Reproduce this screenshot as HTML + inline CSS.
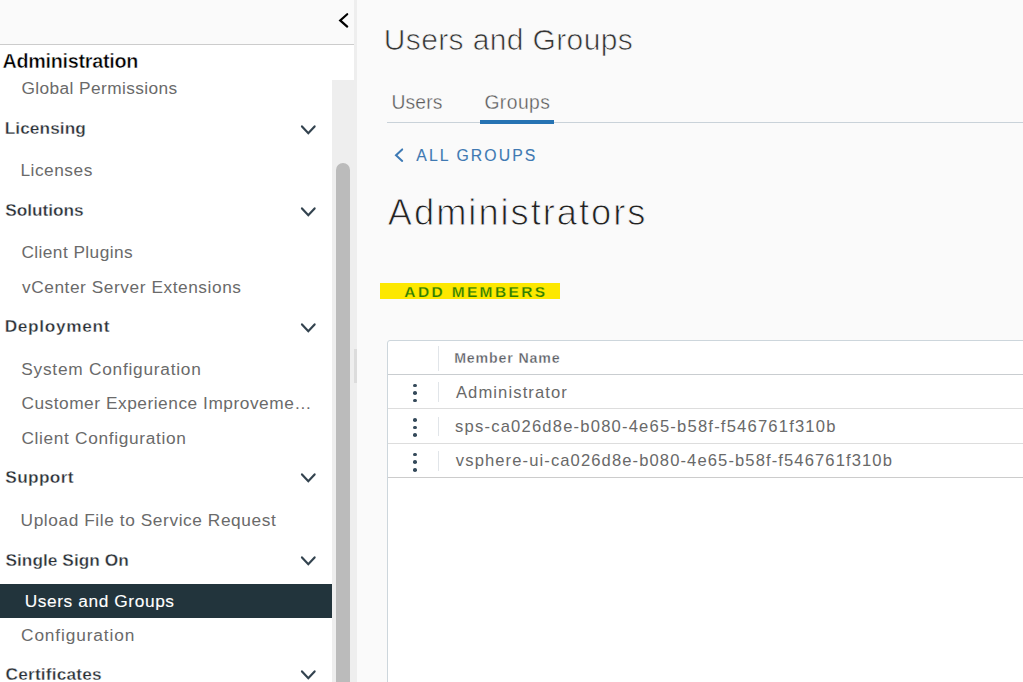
<!DOCTYPE html>
<html><head><meta charset="utf-8"><title>vSphere - Users and Groups</title>
<style>
html,body{margin:0;padding:0;}
body{width:1023px;height:682px;overflow:hidden;position:relative;background:#fafafa;font-family:"Liberation Sans",sans-serif;}
.t{position:absolute;white-space:nowrap;line-height:24px;height:24px;}
.a{position:absolute;}

</style></head>
<body>
<!-- sidebar -->
<div class="a" style="left:0;top:0;width:354px;height:44px;background:#fafafa;border-bottom:1px solid #ccc;"></div>
<div class="a" style="left:0;top:45px;width:332px;height:637px;background:#fff;"></div>
<div class="a" style="left:332px;top:45px;width:22px;height:35px;background:#fff;"></div>
<!-- scrollbar -->
<div class="a" style="left:332px;top:80px;width:22px;height:602px;background:#eeeeee;"></div>
<div class="a" style="left:336px;top:162.5px;width:14px;height:540px;background:#bbbbbb;border-radius:7px;"></div>
<!-- splitter -->
<div class="a" style="left:354px;top:0;width:3.3px;height:682px;background:#eeeeee;"></div>
<div class="a" style="left:354px;top:349px;width:3.3px;height:33.5px;background:#dcdcdc;"></div>
<!-- collapse chevron -->
<svg class="a" style="left:334px;top:8px;" width="20" height="24" viewBox="0 0 20 24"><path d="M13.2 6.2 L6.2 12.4 L13.2 18.6" fill="none" stroke="#000" stroke-width="2.2" stroke-linecap="round" stroke-linejoin="miter"/></svg>
<!-- selected row -->
<div class="a" style="left:0;top:584px;width:332px;height:33.8px;background:#22343c;z-index:2;"></div>
<!-- tabs line -->
<div class="a" style="left:387px;top:121.8px;width:640px;height:1.5px;background:#c9d2d9;"></div>
<div class="a" style="left:480.2px;top:119.7px;width:73.8px;height:3.9px;background:#2673b3;"></div>
<!-- all groups chevron -->
<svg class="a" style="left:390px;top:145px;" width="20" height="20" viewBox="0 0 20 20"><path d="M12.2 4.4 L6.0 10.15 L12.2 15.9" fill="none" stroke="#3d7ab5" stroke-width="2" stroke-linecap="round" stroke-linejoin="miter"/></svg>
<!-- highlight -->
<div class="a" style="left:380.3px;top:283.4px;width:179.7px;height:15.8px;background:#fde800;z-index:2;"></div>
<!-- table -->
<div class="a" style="left:387px;top:339.75px;width:660px;height:400px;background:#fff;border:1.3px solid #cdd6dc;border-radius:3px;z-index:1;box-sizing:border-box;"></div>
<div class="a" style="left:388px;top:373.9px;width:660px;height:1.2px;background:#c9cdd0;z-index:2;"></div>
<div class="a" style="left:388px;top:408px;width:660px;height:1.2px;background:#ddd;z-index:2;"></div>
<div class="a" style="left:388px;top:442.7px;width:660px;height:1.2px;background:#ddd;z-index:2;"></div>
<div class="a" style="left:388px;top:477.3px;width:660px;height:1.2px;background:#ccc;z-index:2;"></div>
<!-- column separators -->
<div class="a" style="left:437.5px;top:346.4px;width:1.5px;height:24.4px;background:#e1e5e9;z-index:2;"></div>
<div class="a" style="left:437.5px;top:382px;width:1.5px;height:19.6px;background:#e1e5e9;z-index:2;"></div>
<div class="a" style="left:437.5px;top:416.5px;width:1.5px;height:19.6px;background:#e1e5e9;z-index:2;"></div>
<div class="a" style="left:437.5px;top:451px;width:1.5px;height:19.6px;background:#e1e5e9;z-index:2;"></div>
<!-- sidebar chevrons -->
<svg class="a" style="left:298px;top:120.6px;" width="20" height="16" viewBox="0 0 20 16"><path d="M4 5.4 L10.3 12.2 L16.6 5.4" fill="none" stroke="#33434f" stroke-width="2.2" stroke-linecap="round" stroke-linejoin="miter"/></svg>
<svg class="a" style="left:298px;top:202.9px;" width="20" height="16" viewBox="0 0 20 16"><path d="M4 5.4 L10.3 12.2 L16.6 5.4" fill="none" stroke="#33434f" stroke-width="2.2" stroke-linecap="round" stroke-linejoin="miter"/></svg>
<svg class="a" style="left:298px;top:318.6px;" width="20" height="16" viewBox="0 0 20 16"><path d="M4 5.4 L10.3 12.2 L16.6 5.4" fill="none" stroke="#33434f" stroke-width="2.2" stroke-linecap="round" stroke-linejoin="miter"/></svg>
<svg class="a" style="left:298px;top:469.4px;" width="20" height="16" viewBox="0 0 20 16"><path d="M4 5.4 L10.3 12.2 L16.6 5.4" fill="none" stroke="#33434f" stroke-width="2.2" stroke-linecap="round" stroke-linejoin="miter"/></svg>
<svg class="a" style="left:298px;top:552.1px;" width="20" height="16" viewBox="0 0 20 16"><path d="M4 5.4 L10.3 12.2 L16.6 5.4" fill="none" stroke="#33434f" stroke-width="2.2" stroke-linecap="round" stroke-linejoin="miter"/></svg>
<svg class="a" style="left:298px;top:666.1px;" width="20" height="16" viewBox="0 0 20 16"><path d="M4 5.4 L10.3 12.2 L16.6 5.4" fill="none" stroke="#33434f" stroke-width="2.2" stroke-linecap="round" stroke-linejoin="miter"/></svg>
<!-- row action dots -->
<div class="a" style="left:413.0px;top:383.6px;width:3.8px;height:3.6px;border-radius:50%;background:#34495a;z-index:3;"></div>
<div class="a" style="left:413.0px;top:391.2px;width:3.8px;height:3.6px;border-radius:50%;background:#34495a;z-index:3;"></div>
<div class="a" style="left:413.0px;top:398.8px;width:3.8px;height:3.6px;border-radius:50%;background:#34495a;z-index:3;"></div>
<div class="a" style="left:413.0px;top:418.2px;width:3.8px;height:3.6px;border-radius:50%;background:#34495a;z-index:3;"></div>
<div class="a" style="left:413.0px;top:425.8px;width:3.8px;height:3.6px;border-radius:50%;background:#34495a;z-index:3;"></div>
<div class="a" style="left:413.0px;top:433.4px;width:3.8px;height:3.6px;border-radius:50%;background:#34495a;z-index:3;"></div>
<div class="a" style="left:413.0px;top:452.8px;width:3.8px;height:3.6px;border-radius:50%;background:#34495a;z-index:3;"></div>
<div class="a" style="left:413.0px;top:460.4px;width:3.8px;height:3.6px;border-radius:50%;background:#34495a;z-index:3;"></div>
<div class="a" style="left:413.0px;top:468.0px;width:3.8px;height:3.6px;border-radius:50%;background:#34495a;z-index:3;"></div>

<div class="t" style="left:2.39px;top:48.00px;line-height:26px;height:26px;font-size:19.8px;font-weight:700;color:#000;letter-spacing:-0.276px;-webkit-text-stroke:0.45px #fff;">Administration</div>
<div class="t" style="left:21.38px;top:76.00px;line-height:24px;height:24px;font-size:17.3px;font-weight:400;color:#6a6a6a;letter-spacing:0.413px;">Global Permissions</div>
<div class="t" style="left:4.70px;top:116.00px;line-height:24px;height:24px;font-size:17.3px;font-weight:700;color:#2b3137;letter-spacing:0.067px;-webkit-text-stroke:0.35px #fff;">Licensing</div>
<div class="t" style="left:20.49px;top:158.00px;line-height:24px;height:24px;font-size:17.3px;font-weight:400;color:#6a6a6a;letter-spacing:0.514px;">Licenses</div>
<div class="t" style="left:5.34px;top:198.00px;line-height:24px;height:24px;font-size:17.3px;font-weight:700;color:#2b3137;letter-spacing:-0.067px;-webkit-text-stroke:0.35px #fff;">Solutions</div>
<div class="t" style="left:21.38px;top:240.00px;line-height:24px;height:24px;font-size:17.3px;font-weight:400;color:#6a6a6a;letter-spacing:0.431px;">Client Plugins</div>
<div class="t" style="left:22.00px;top:275.00px;line-height:24px;height:24px;font-size:17.3px;font-weight:400;color:#6a6a6a;letter-spacing:0.558px;">vCenter Server Extensions</div>
<div class="t" style="left:4.71px;top:314.00px;line-height:24px;height:24px;font-size:17.3px;font-weight:700;color:#2b3137;letter-spacing:0.642px;-webkit-text-stroke:0.35px #fff;">Deployment</div>
<div class="t" style="left:21.25px;top:357.00px;line-height:24px;height:24px;font-size:17.3px;font-weight:400;color:#6a6a6a;letter-spacing:0.755px;">System Configuration</div>
<div class="t" style="left:21.38px;top:391.00px;line-height:24px;height:24px;font-size:17.3px;font-weight:400;color:#6a6a6a;letter-spacing:0.535px;">Customer Experience Improveme…</div>
<div class="t" style="left:21.38px;top:426.00px;line-height:24px;height:24px;font-size:17.3px;font-weight:400;color:#6a6a6a;letter-spacing:0.666px;">Client Configuration</div>
<div class="t" style="left:5.34px;top:465.00px;line-height:24px;height:24px;font-size:17.3px;font-weight:700;color:#2b3137;letter-spacing:0.338px;-webkit-text-stroke:0.35px #fff;">Support</div>
<div class="t" style="left:20.58px;top:508.00px;line-height:24px;height:24px;font-size:17.3px;font-weight:400;color:#6a6a6a;letter-spacing:0.584px;">Upload File to Service Request</div>
<div class="t" style="left:5.46px;top:548.00px;line-height:24px;height:24px;font-size:17.3px;font-weight:700;color:#2b3137;letter-spacing:0.031px;-webkit-text-stroke:0.35px #fff;">Single Sign On</div>
<div class="t" style="left:24.66px;top:589.00px;line-height:24px;height:24px;font-size:17.3px;font-weight:400;color:#fff;letter-spacing:0.607px;z-index:3;-webkit-text-stroke:0.12px #fff;">Users and Groups</div>
<div class="t" style="left:21.05px;top:623.00px;line-height:24px;height:24px;font-size:17.3px;font-weight:400;color:#6a6a6a;letter-spacing:0.868px;">Configuration</div>
<div class="t" style="left:5.60px;top:662.00px;line-height:24px;height:24px;font-size:17.3px;font-weight:700;color:#2b3137;letter-spacing:0.172px;-webkit-text-stroke:0.35px #fff;">Certificates</div>
<div class="t" style="left:383.78px;top:21.00px;line-height:37px;height:37px;font-size:30.0px;font-weight:400;color:#333;letter-spacing:0.369px;-webkit-text-stroke:0.7px #fafafa;">Users and Groups</div>
<div class="t" style="left:391.38px;top:90.00px;line-height:25px;height:25px;font-size:19.3px;font-weight:400;color:#5a5a5a;letter-spacing:0.196px;-webkit-text-stroke:0.3px #fafafa;">Users</div>
<div class="t" style="left:484.38px;top:90.00px;line-height:25px;height:25px;font-size:19.3px;font-weight:400;color:#5a5a5a;letter-spacing:0.460px;-webkit-text-stroke:0.3px #fafafa;">Groups</div>
<div class="t" style="left:416.35px;top:145.00px;line-height:21px;height:21px;font-size:15.8px;font-weight:400;color:#4079b2;letter-spacing:2.064px;-webkit-text-stroke:0.12px #4079b2;">ALL GROUPS</div>
<div class="t" style="left:387.82px;top:190.00px;line-height:45px;height:45px;font-size:36.3px;font-weight:400;color:#222;letter-spacing:1.972px;-webkit-text-stroke:0.9px #fafafa;">Administrators</div>
<div class="t" style="left:404.37px;top:281.00px;line-height:21px;height:21px;font-size:15.5px;font-weight:700;color:#2f7d00;letter-spacing:2.354px;z-index:3;-webkit-text-stroke:0.25px #fde800;">ADD MEMBERS</div>
<div class="t" style="left:454.20px;top:348.00px;line-height:20px;height:20px;font-size:14.2px;font-weight:700;color:#5c6066;letter-spacing:0.854px;z-index:3;-webkit-text-stroke:0.3px #fff;">Member Name</div>
<div class="t" style="left:455.89px;top:381.00px;line-height:23px;height:23px;font-size:16.6px;font-weight:400;color:#696969;letter-spacing:1.106px;z-index:3;">Administrator</div>
<div class="t" style="left:455.11px;top:415.00px;line-height:23px;height:23px;font-size:16.6px;font-weight:400;color:#696969;letter-spacing:1.188px;z-index:3;">sps-ca026d8e-b080-4e65-b58f-f546761f310b</div>
<div class="t" style="left:455.87px;top:449.00px;line-height:23px;height:23px;font-size:16.6px;font-weight:400;color:#696969;letter-spacing:1.095px;z-index:3;">vsphere-ui-ca026d8e-b080-4e65-b58f-f546761f310b</div>
</body></html>
